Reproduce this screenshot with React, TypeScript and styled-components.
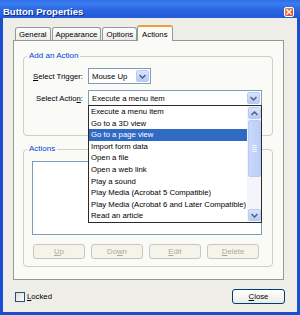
import React from 'react'
import styled, { createGlobalStyle } from 'styled-components'

const GlobalStyle = createGlobalStyle`
  body {
    margin: 0;
    font-family: "Liberation Sans", Arial, sans-serif;
    font-size: 7.75px;
    color: #000;
  }
`

const Window = styled.div`
  width: 300px;
  height: 315px;
  display: flex;
  flex-direction: column;
  background: #1a4fd3;
  box-sizing: border-box;
`
const TitleBar = styled.div`
  height: 18px;
  box-sizing: border-box;
  padding: 5px 6px 0 3px;
  display: flex;
  align-items: center;
  justify-content: space-between;
  background: linear-gradient(180deg, #2f6ee6 0%, #3b7cf0 20%, #2a66e0 55%, #2259d6 100%);
`
const TitleText = styled.span`
  color: #fff;
  font-weight: bold;
  font-size: 9.5px;
  text-shadow: 1px 1px 0 #0c2f8c;
`
const CloseBox = styled.div`
  width: 10px;
  height: 10px;
  box-sizing: border-box;
  border: 1px solid #fff;
  border-radius: 2px;
  background: linear-gradient(135deg, #f08a62, #d9451f);
  display: flex;
  align-items: center;
  justify-content: center;
`
const Body = styled.div`
  flex: 1;
  margin: 0 3px 3px;
  background: #eeede7;
  padding: 7px 13px 8px 10px;
  display: flex;
  flex-direction: column;
`
const TabRow = styled.div`
  height: 15px;
  display: flex;
  align-items: flex-end;
  gap: 1px;
  padding-left: 2px;
`
const Tab = styled.div<{ $active?: boolean }>`
  position: relative;
  z-index: ${(p) => (p.$active ? 1 : 0)};
  box-sizing: border-box;
  height: ${(p) => (p.$active ? 16 : 13)}px;
  margin: 0 ${(p) => (p.$active ? -1 : 0)}px ${(p) => (p.$active ? -1 : 0)}px;
  padding: 0 ${(p) => (p.$active ? 4 : 3)}px;
  border: 1px solid #919b9c;
  border-top: ${(p) => (p.$active ? '2px solid #e8a03c' : '1px solid #919b9c')};
  border-bottom: none;
  border-radius: 3px 3px 0 0;
  background: ${(p) => (p.$active ? '#fafaf7' : 'linear-gradient(180deg, #ffffff, #ecebe5)')};
  display: flex;
  align-items: center;
  white-space: nowrap;
`
const TabPanel = styled.div`
  height: 240px;
  box-sizing: border-box;
  border: 1px solid #919b9c;
  background: #fafaf7;
  padding: 15px 10px 0 9px;
  display: flex;
  flex-direction: column;
  gap: 13px;
`
const GroupBox = styled.div<{ $h: number }>`
  height: ${(p) => p.$h}px;
  box-sizing: border-box;
  border: 1px solid #d0d0bf;
  border-radius: 4px;
  display: flex;
  flex-direction: column;
`
const Legend = styled.span`
  align-self: flex-start;
  height: 10px;
  line-height: 10px;
  margin: -6px 0 0 3px;
  padding: 0 2px;
  background: #fafaf7;
  color: #0046d5;
  font-size: 8px;
`
const FormGrid = styled.div`
  margin-top: 7px;
  display: grid;
  grid-template-columns: 59px auto;
  column-gap: 5px;
  row-gap: 6px;
  align-items: center;
  justify-items: start;
`
const FieldLabel = styled.span`
  justify-self: end;
  white-space: nowrap;
`
const Combo = styled.div<{ $w: number }>`
  position: relative;
  width: ${(p) => p.$w}px;
  height: 16px;
  box-sizing: border-box;
  border: 1px solid #7f9db9;
  background: #fff;
  display: flex;
  align-items: center;
  padding: 0 1px 0 3px;
`
const ComboText = styled.span`
  flex: 1;
  white-space: nowrap;
`
const ArrowButton = styled.div<{ $h?: number }>`
  width: 13px;
  height: ${(p) => p.$h ?? 12}px;
  box-sizing: border-box;
  border: 1px solid #b9cbf3;
  border-radius: 2px;
  background: linear-gradient(180deg, #dbe5fd, #b7caf5);
  display: flex;
  align-items: center;
  justify-content: center;
  flex: none;
`
const DropList = styled.div`
  position: absolute;
  top: 100%;
  left: -1px;
  right: -1px;
  height: 118px;
  box-sizing: border-box;
  border: 1px solid #2b2b2b;
  background: #fff;
  display: flex;
  z-index: 5;
`
const Options = styled.div`
  flex: 1;
  min-width: 0;
  overflow: hidden;
  display: flex;
  flex-direction: column;
`
const Option = styled.div<{ $sel?: boolean }>`
  height: 11.6px;
  line-height: 11.6px;
  padding-left: 2px;
  white-space: nowrap;
  background: ${(p) => (p.$sel ? '#316ac5' : 'transparent')};
  color: ${(p) => (p.$sel ? '#fff' : '#000')};
`
const ScrollBar = styled.div`
  width: 14px;
  flex: none;
  display: flex;
  flex-direction: column;
  align-items: center;
  background: #f4f4fb;
  padding: 1px 0;
  box-sizing: border-box;
  gap: 1px;
`
const Thumb = styled.div`
  width: 13px;
  height: 57px;
  box-sizing: border-box;
  border: 1px solid #b9cbf3;
  border-radius: 2px;
  background: linear-gradient(90deg, #c9d8fc, #bccdf7);
  display: flex;
  flex-direction: column;
  align-items: center;
  justify-content: center;
  gap: 1px;
`
const Grip = styled.div`
  width: 5px;
  height: 1px;
  background: #eef3fe;
`
const Track = styled.div`
  flex: 1;
`
const ListBox = styled.div`
  margin: 7px 0 0 8px;
  width: 230px;
  height: 74px;
  box-sizing: border-box;
  border: 1px solid #7f9db9;
  background: #fff;
`
const ButtonRow = styled.div`
  margin: 9px 0 0 9px;
  display: flex;
  gap: 6px;
`
const PushButton = styled.div<{ $disabled?: boolean; $w?: number }>`
  width: ${(p) => p.$w ?? 52}px;
  height: 15px;
  box-sizing: border-box;
  border: 1px solid ${(p) => (p.$disabled ? '#c9c7ba' : '#003c74')};
  border-radius: 3px;
  background: ${(p) => (p.$disabled ? '#f5f4ea' : 'linear-gradient(180deg, #ffffff, #ecebe6)')};
  color: ${(p) => (p.$disabled ? '#aca899' : '#000')};
  display: flex;
  align-items: center;
  justify-content: center;
`
const Footer = styled.div`
  margin: 9px -1px 0 0;
  height: 15px;
  padding-left: 2px;
  display: flex;
  align-items: center;
  justify-content: space-between;
`
const CheckRow = styled.label`
  display: flex;
  align-items: center;
  gap: 2px;
`
const CheckBox = styled.span`
  width: 10px;
  height: 10px;
  box-sizing: border-box;
  border: 1px solid #1c5180;
  background: linear-gradient(135deg, #dcdcd7, #ffffff);
`

const Chevron = ({ up }: { up?: boolean }) => (
  <svg width="7" height="5" viewBox="0 0 7 5">
    <polyline
      points={up ? '0.5,4 3.5,1 6.5,4' : '0.5,1 3.5,4 6.5,1'}
      fill="none"
      stroke="#4d6185"
      strokeWidth="1.5"
    />
  </svg>
)

const actions = [
  'Execute a menu item',
  'Go to a 3D view',
  'Go to a page view',
  'Import form data',
  'Open a file',
  'Open a web link',
  'Play a sound',
  'Play Media (Acrobat 5 Compatible)',
  'Play Media (Acrobat 6 and Later Compatible)',
  'Read an article',
]

const App = () => (
  <>
    <GlobalStyle />
    <Window>
      <TitleBar>
        <TitleText>Button Properties</TitleText>
        <CloseBox>
          <svg width="6" height="6" viewBox="0 0 6 6">
            <path d="M0.5 0.5 L5.5 5.5 M5.5 0.5 L0.5 5.5" stroke="#fff" strokeWidth="1.4" />
          </svg>
        </CloseBox>
      </TitleBar>
      <Body>
        <TabRow>
          <Tab>General</Tab>
          <Tab>Appearance</Tab>
          <Tab>Options</Tab>
          <Tab $active>Actions</Tab>
        </TabRow>
        <TabPanel>
          <GroupBox $h={80}>
            <Legend>Add an Action</Legend>
            <FormGrid>
              <FieldLabel>
                <u>S</u>elect Trigger:
              </FieldLabel>
              <Combo $w={63}>
                <ComboText>Mouse Up</ComboText>
                <ArrowButton>
                  <Chevron />
                </ArrowButton>
              </Combo>
              <FieldLabel>
                Select Actio<u>n</u>:
              </FieldLabel>
              <Combo $w={174}>
                <ComboText>Execute a menu item</ComboText>
                <ArrowButton>
                  <Chevron />
                </ArrowButton>
                <DropList>
                  <Options>
                    {actions.map((a, i) => (
                      <Option key={a} $sel={i === 2}>
                        {a}
                      </Option>
                    ))}
                  </Options>
                  <ScrollBar>
                    <ArrowButton>
                      <Chevron up />
                    </ArrowButton>
                    <Thumb>
                      <Grip />
                      <Grip />
                      <Grip />
                      <Grip />
                    </Thumb>
                    <Track />
                    <ArrowButton>
                      <Chevron />
                    </ArrowButton>
                  </ScrollBar>
                </DropList>
              </Combo>
            </FormGrid>
          </GroupBox>
          <GroupBox $h={118}>
            <Legend>Actions</Legend>
            <ListBox />
            <ButtonRow>
              <PushButton $disabled>
                <u>U</u>p
              </PushButton>
              <PushButton $disabled>
                Do<u>w</u>n
              </PushButton>
              <PushButton $disabled>
                <u>E</u>dit
              </PushButton>
              <PushButton $disabled>
                <u>D</u>elete
              </PushButton>
            </ButtonRow>
          </GroupBox>
        </TabPanel>
        <Footer>
          <CheckRow>
            <CheckBox />
            <span>
              <u>L</u>ocked
            </span>
          </CheckRow>
          <PushButton $w={53}>
            <u>C</u>lose
          </PushButton>
        </Footer>
      </Body>
    </Window>
  </>
)

export default App
